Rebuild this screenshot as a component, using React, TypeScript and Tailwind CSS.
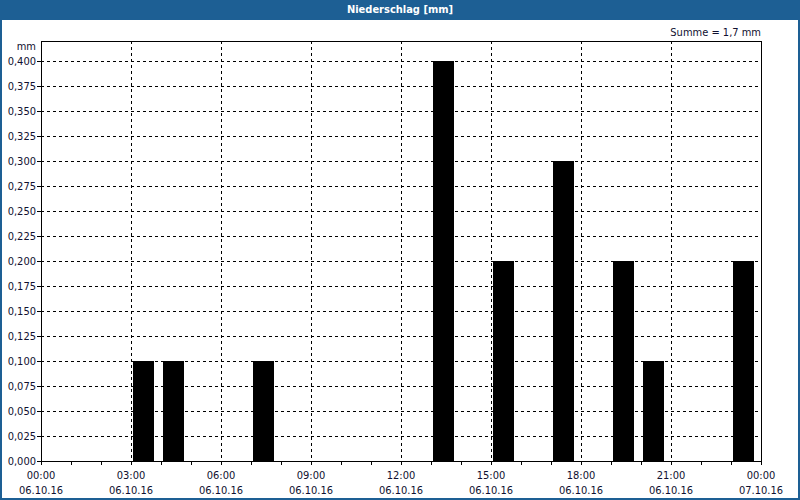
import React from "react";

const bars: [number, number][] = [[133,0.1],[163,0.1],[253,0.1],[433,0.4],[493,0.2],[553,0.3],[613,0.2],[643,0.1],[733,0.2]];
const yLabels = Array.from({length:17},(_,i)=>i*0.025);
const times = ["00:00","03:00","06:00","09:00","12:00","15:00","18:00","21:00","00:00"];
const F = "Tahoma, DejaVu Sans Condensed, DejaVu Sans, sans-serif";

export default function App(){
  const y=(v:number)=>461-v*1000;
  return (
    <div className="w-[800px] h-[500px] bg-[#1d5f94] flex flex-col" style={{fontFamily:F}}>
      <div className="h-[20px] flex items-center justify-center text-white text-[11px] font-bold">Niederschlag [mm]</div>
      <div className="flex-1 mx-[2px] mb-[2px] bg-white">
        <svg width="796" height="478" viewBox="2 20 796 478" className="block">
          {yLabels.map((v,i)=>(
            <g key={i}>
              {i>0 && <line x1={41} x2={761} y1={y(v)+0.5} y2={y(v)+0.5} stroke="#000" strokeDasharray="3 3"/>}
              <line x1={37} x2={41} y1={y(v)+0.5} y2={y(v)+0.5} stroke="#000"/>
              <text x={36} y={y(v)+4} textAnchor="end" fontSize="11" fill="#101030" fontFamily={F}>{v.toFixed(3).replace(".",",")}</text>
            </g>
          ))}
          <text x={36} y={50} textAnchor="end" fontSize="11" fill="#101030" fontFamily={F}>mm</text>
          <text x={761} y={36} textAnchor="end" fontSize="11" fill="#101030" fontFamily={F}>Summe = 1,7 mm</text>
          {times.map((t,i)=>{const x=41+i*90;return (
            <g key={i}>
              {i>0&&i<8&&<line x1={x+0.5} x2={x+0.5} y1={41} y2={461} stroke="#000" strokeDasharray="3 3"/>}
              <text x={x} y={479} textAnchor="middle" fontSize="11" fill="#101030" fontFamily={F}>{t}</text>
              <text x={x} y={494} textAnchor="middle" fontSize="11" fill="#101030" fontFamily={F}>{i===8?"07.10.16":"06.10.16"}</text>
            </g>)})}
          {Array.from({length:25},(_,i)=>41+i*30).map(x=>(
            <line key={x} x1={x+0.5} x2={x+0.5} y1={461} y2={465} stroke="#000"/>
          ))}
          {bars.map(([x,v])=>(<rect key={x} x={x} y={y(v)} width={21} height={v*1000} fill="#000"/>))}
          <rect x={41.5} y={41.5} width={720} height={420} fill="none" stroke="#000"/>
        </svg>
      </div>
    </div>
  );
}
